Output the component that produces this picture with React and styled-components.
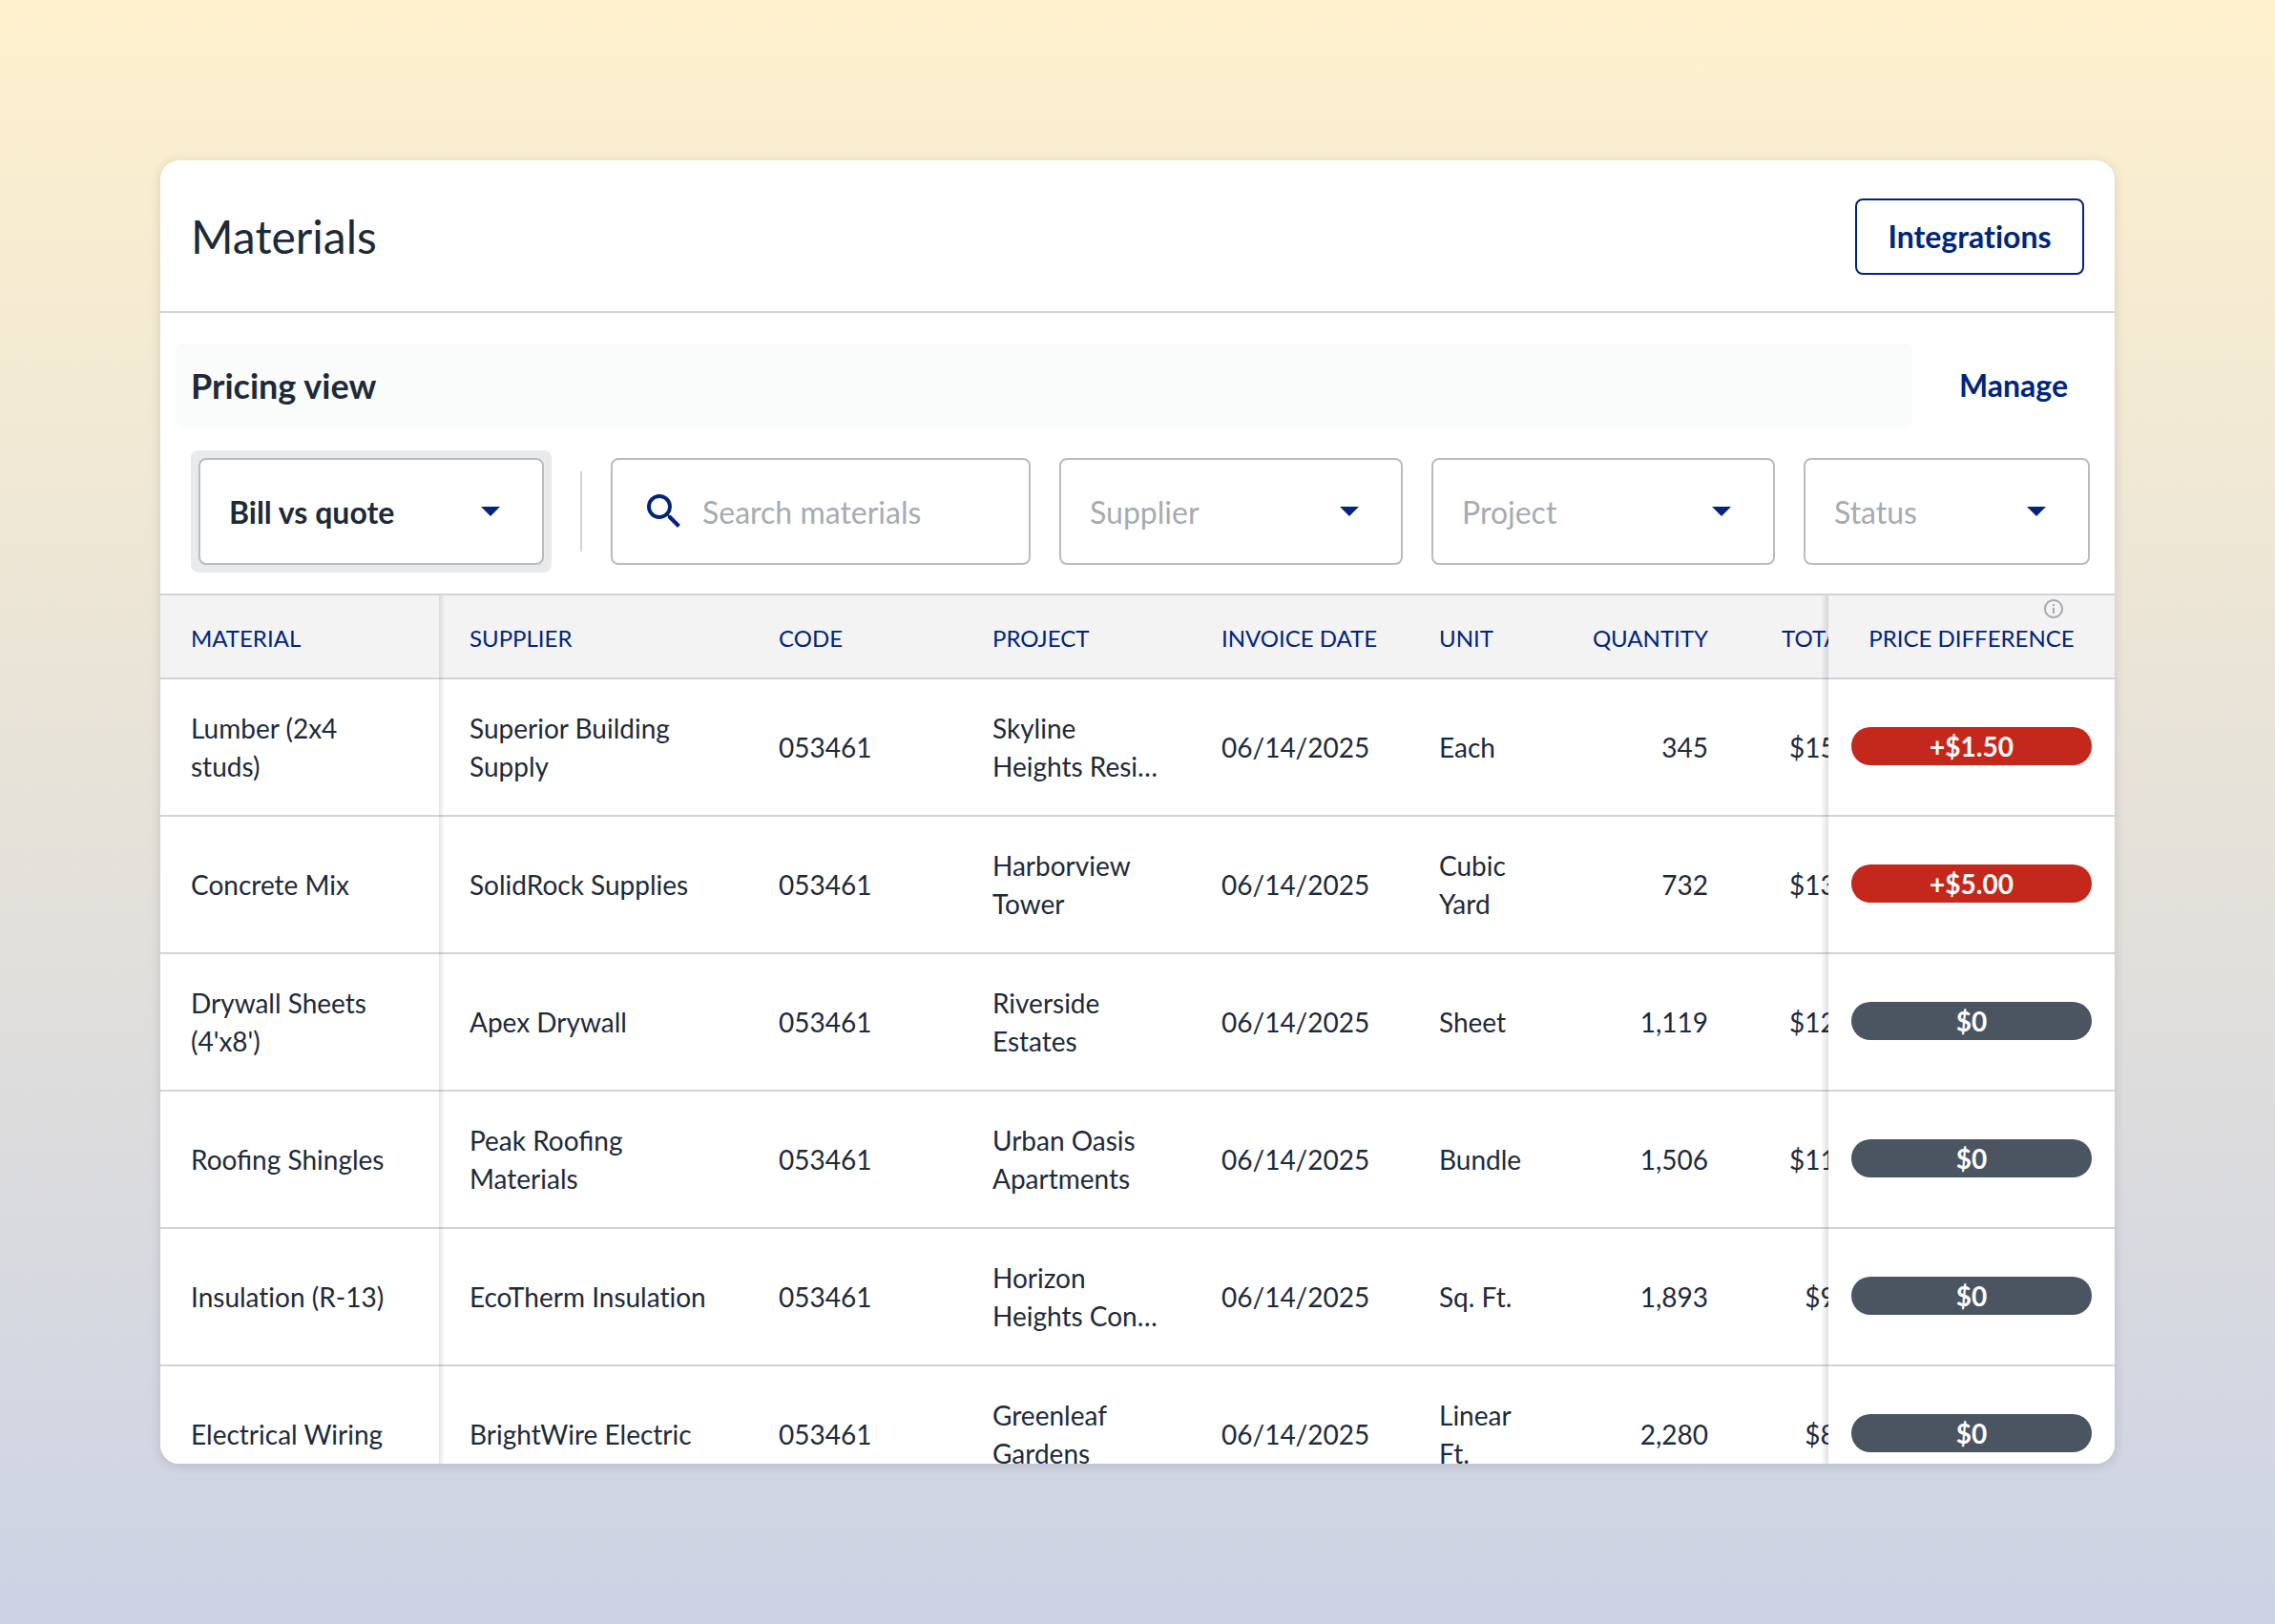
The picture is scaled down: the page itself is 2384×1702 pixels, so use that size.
import React, { useState } from "react";
import styled, { createGlobalStyle } from "styled-components";
import { MdInfoOutline, MdSearch } from "react-icons/md";

const navy = "#00257d";
const ink = "#1d2a39";
const muted = "#a6abb2";
const line = "#d2d3d9";
const fieldLine = "#b8bcc1";

const GlobalStyle = createGlobalStyle`
    * {
        box-sizing: border-box;
    }

    body {
        margin: 0;
        font-family: Lato, "Liberation Sans", sans-serif;
        font-variant-ligatures: no-common-ligatures;
        color: ${ink};
    }

    button, input, select {
        font-family: inherit;
        font-variant-ligatures: inherit;
    }
`;

const Page = styled.div`
    display: flex;
    height: 100vh;
    padding: 168px;
    background: linear-gradient(#fff1ce, #cdd3e5);
`;

const Card = styled.main`
    flex: 1;
    min-width: 0;
    display: flex;
    flex-direction: column;
    overflow: hidden;
    background-color: #fff;
    border-radius: 20px;
    box-shadow: 0 2px 12px rgba(29, 42, 57, 0.16);
`;

const Header = styled.header`
    flex: none;
    display: flex;
    align-items: center;
    justify-content: space-between;
    height: 160px;
    padding: 2px 32px 0;
    border-bottom: 2px solid ${line};
`;

const Title = styled.h1`
    margin: 0;
    font-size: 48px;
    font-weight: 400;
    line-height: 56px;
`;

const OutlineButton = styled.button`
    min-width: 240px;
    height: 80px;
    padding: 0 30px 2px;
    font-size: 32px;
    font-weight: 700;
    color: ${navy};
    background-color: #fff;
    border: 2px solid ${navy};
    border-radius: 8px;
    cursor: pointer;
`;

const Controls = styled.section`
    flex: none;
    padding: 32px 0 22px;
    border-bottom: 2px solid ${line};
`;

const ViewBar = styled.div`
    display: flex;
    align-items: center;
    padding: 0 16px;
    margin-bottom: 24px;
`;

const ViewTitle = styled.h2`
    flex: 1;
    margin: 0;
    padding: 0 16px;
    font-size: 36px;
    font-weight: 700;
    line-height: 88px;
    background-color: #fafcfb;
    border-radius: 8px;
`;

const TextButton = styled.button`
    width: 196px;
    padding: 0 16px 2px 32px;
    font-size: 32px;
    font-weight: 700;
    color: ${navy};
    background: none;
    border: 0;
    cursor: pointer;
`;

const Filters = styled.div`
    display: grid;
    grid-template-columns: 378px 2px 440fr 360fr 360fr 300fr;
    align-items: center;
    gap: 30px;
    padding: 0 26px 0 32px;
`;

const Highlight = styled.div`
    padding: 8px;
    background-color: #e8eaec;
    border-radius: 8px;
`;

const Divider = styled.div`
    height: 84px;
    background-color: ${line};
`;

const Field = styled.div`
    position: relative;
    display: flex;
    align-items: center;
    gap: 16px;
    min-width: 0;
    height: 112px;
    padding: ${props => props.$search ? "0 30px" : "0"};
    background-color: #fff;
    border: 2px solid ${fieldLine};
    border-radius: 8px;
`;

const SearchInput = styled.input`
    flex: 1;
    min-width: 0;
    padding: 0;
    font-size: 32px;
    color: ${ink};
    background: none;
    border: 0;
    outline: 0;

    &::placeholder {
        color: ${muted};
        opacity: 1;
    }
`;

const Select = styled.select`
    appearance: none;
    width: 100%;
    height: 100%;
    padding: 0 80px 0 30px;
    font-size: 32px;
    font-weight: ${props => props.$strong ? 700 : 400};
    color: ${props => props.$strong ? ink : muted};
    background: none;
    border: 0;
    outline: 0;
`;

const Caret = styled.svg`
    position: absolute;
    top: 30px;
    right: 30px;
    width: 48px;
    height: 48px;
    fill: ${navy};
    pointer-events: none;
`;

const TableWrap = styled.div`
    flex: 1;
    min-height: 0;
    overflow: auto;
    scrollbar-width: none;
`;

const Table = styled.table`
    width: 2104px;
    min-width: 100%;
    table-layout: fixed;
    border-collapse: separate;
    border-spacing: 0;
`;

const Col = styled.col`
    width: ${props => props.$width}px;
`;

// first and last columns stay in view while the rest scrolls
const pinned = side => {
    if (side === "left") {
        return `
            position: sticky;
            left: 0;
            z-index: 1;
            &::after {
                content: "";
                position: absolute;
                top: 0;
                bottom: -2px;
                left: 100%;
                width: 6px;
                background: linear-gradient(to right, rgba(29, 42, 57, 0.12), rgba(29, 42, 57, 0));
            }
        `;
    }
    if (side === "right") {
        return `
            position: sticky;
            right: 0;
            z-index: 1;
            &::before {
                content: "";
                position: absolute;
                top: 0;
                bottom: -2px;
                right: 100%;
                width: 8px;
                background: linear-gradient(to left, rgba(29, 42, 57, 0.14), rgba(29, 42, 57, 0));
            }
        `;
    }
    return "";
};

const HeadCell = styled.th`
    height: 88px;
    padding: 4px ${props => props.$pin === "right" ? 0 : 32}px 0;
    font-size: 24px;
    font-weight: 400;
    line-height: 32px;
    white-space: nowrap;
    text-align: ${props => props.$align || "left"};
    text-transform: uppercase;
    color: ${navy};
    background-color: #f3f3f3;
    border-bottom: 2px solid ${line};
    ${props => pinned(props.$pin)}
`;

const BodyRow = styled.tr`
    font-variant-ligatures: ${props => props.$ligatures ? "common-ligatures" : "inherit"};
`;

const Cell = styled.td`
    height: 144px;
    padding: 0 32px;
    font-size: 28px;
    line-height: 40px;
    text-align: ${props => props.$align || "left"};
    background-color: #fff;
    border-bottom: 2px solid ${line};
    ${props => pinned(props.$pin)}
`;

const PriceCell = styled(Cell)`
    padding: 0 24px 2px;
`;

const Pill = styled.div`
    font-weight: 700;
    text-align: center;
    color: #fff;
    background-color: ${props => props.$over ? "#c4281c" : "#4a5561"};
    border-radius: 20px;
`;

const InfoIcon = styled(MdInfoOutline)`
    position: absolute;
    top: 2px;
    right: 52px;
    width: 24px;
    height: 24px;
    color: ${muted};
`;

const columns = [
    { label: "Material", width: 292, pin: "left" },
    { label: "Supplier", width: 324 },
    { label: "Code", width: 224 },
    { label: "Project", width: 240 },
    { label: "Invoice date", width: 228 },
    { label: "Unit", width: 160 },
    { label: "Quantity", width: 186, align: "right" },
    { label: "Total", width: 150, align: "right" },
    { label: "Price difference", width: 300, align: "center", pin: "right" },
];

const rows = [
    { material: "Lumber (2x4 studs)", supplier: "Superior Building Supply", project: "Skyline Heights Resi…", unit: "Each", quantity: "345", total: "$155", difference: "+$1.50" },
    { material: "Concrete Mix", supplier: "SolidRock Supplies", project: "Harborview Tower", unit: "Cubic Yard", quantity: "732", total: "$139", difference: "+$5.00" },
    { material: "Drywall Sheets (4'x8')", supplier: "Apex Drywall", project: "Riverside Estates", unit: "Sheet", quantity: "1,119", total: "$123", difference: "$0" },
    { material: "Roofing Shingles", supplier: "Peak Roofing Materials", project: "Urban Oasis Apartments", unit: "Bundle", quantity: "1,506", total: "$113", difference: "$0", ligatures: true },
    { material: "Insulation (R-13)", supplier: "EcoTherm Insulation", project: "Horizon Heights Con…", unit: "Sq. Ft.", quantity: "1,893", total: "$94", difference: "$0" },
    { material: "Electrical Wiring", supplier: "BrightWire Electric", project: "Greenleaf Gardens", unit: "Linear Ft.", quantity: "2,280", total: "$82", difference: "$0" },
];

function Dropdown({ label, strong }) {
    return (
        <Field>
            <Select $strong={strong} aria-label={strong ? "Pricing view" : label}>
                <option>{label}</option>
            </Select>
            <Caret viewBox="0 0 24 24" aria-hidden="true">
                <path d="M7 9.5l5 5 5-5z" />
            </Caret>
        </Field>
    );
}

function MaterialRow({ row }) {
    return (
        <BodyRow $ligatures={row.ligatures}>
            <Cell $pin="left">{row.material}</Cell>
            <Cell>{row.supplier}</Cell>
            <Cell>053461</Cell>
            <Cell>{row.project}</Cell>
            <Cell>06/14/2025</Cell>
            <Cell>{row.unit}</Cell>
            <Cell $align="right">{row.quantity}</Cell>
            <Cell $align="right">{row.total}</Cell>
            <PriceCell $pin="right">
                <Pill $over={row.difference.startsWith("+")}>{row.difference}</Pill>
            </PriceCell>
        </BodyRow>
    );
}

function App() {
    const [search, setSearch] = useState("");

    return (
        <Page>
            <GlobalStyle />
            <Card>
                <Header>
                    <Title>Materials</Title>
                    <OutlineButton type="button">Integrations</OutlineButton>
                </Header>
                <Controls>
                    <ViewBar>
                        <ViewTitle>Pricing view</ViewTitle>
                        <TextButton type="button">Manage</TextButton>
                    </ViewBar>
                    <Filters>
                        <Highlight>
                            <Dropdown label="Bill vs quote" strong />
                        </Highlight>
                        <Divider />
                        <Field $search>
                            <MdSearch size={48} color={navy} aria-hidden="true" />
                            <SearchInput
                                type="text"
                                aria-label="Search materials"
                                placeholder="Search materials"
                                value={search}
                                onChange={event => setSearch(event.target.value)}
                            />
                        </Field>
                        <Dropdown label="Supplier" />
                        <Dropdown label="Project" />
                        <Dropdown label="Status" />
                    </Filters>
                </Controls>
                <TableWrap>
                    <Table>
                        <colgroup>
                            {columns.map(col => <Col key={col.label} $width={col.width} />)}
                        </colgroup>
                        <thead>
                            <tr>
                                {columns.map(col => (
                                    <HeadCell key={col.label} scope="col" $align={col.align} $pin={col.pin}>
                                        {col.label}
                                        {col.pin === "right" && <InfoIcon aria-hidden="true" />}
                                    </HeadCell>
                                ))}
                            </tr>
                        </thead>
                        <tbody>
                            {rows.map(row => <MaterialRow key={row.material} row={row} />)}
                        </tbody>
                    </Table>
                </TableWrap>
            </Card>
        </Page>
    );
}

export default App;
